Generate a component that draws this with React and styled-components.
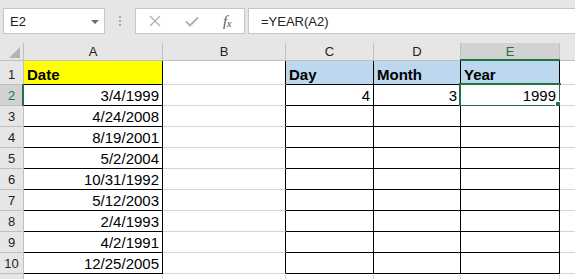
import React from 'react';
import styled, { createGlobalStyle } from 'styled-components';

const GlobalStyle = createGlobalStyle`
  html, body {
    margin: 0;
    padding: 0;
    background: #ffffff;
    overflow: hidden;
  }
  * {
    box-sizing: border-box;
  }
`;

const GREEN = '#217346';
const GRID = '#d4d4d4';
const HEAD_LINE = '#bfbfbf';

const Page = styled.div`
  width: 575px;
  height: 279px;
  overflow: hidden;
  font-family: 'Liberation Sans', Arial, sans-serif;
  background: #ffffff;
`;

const FormulaBar = styled.div`
  display: flex;
  align-items: flex-start;
  height: 43px;
  padding: 8px 0 0 3px;
  background: #e6e6e6;
`;

const NameBox = styled.div`
  position: relative;
  display: flex;
  align-items: center;
  width: 102px;
  height: 26px;
  padding-left: 6px;
  background: #ffffff;
  border: 1px solid #c6c6c6;
  font-size: 13px;
  color: #222;
`;

const Caret = styled.span`
  position: absolute;
  right: 5px;
  top: 11px;
  border-left: 4px solid transparent;
  border-right: 4px solid transparent;
  border-top: 4px solid #6d6d6d;
`;

const Grip = styled.div`
  display: flex;
  flex-direction: column;
  align-items: center;
  justify-content: center;
  gap: 2px;
  width: 30px;
  height: 26px;

  span {
    width: 2px;
    height: 2px;
    background: #a6a6a6;
  }
`;

const FxBox = styled.div`
  display: flex;
  width: 110px;
  height: 26px;
  background: #ffffff;
  border: 1px solid #c6c6c6;
`;

const FxSlot = styled.div`
  display: flex;
  align-items: center;
  justify-content: center;
  width: ${p => p.$w}px;
  height: 100%;
`;

const FxLabel = styled.span`
  font-family: 'Liberation Serif', 'Times New Roman', serif;
  font-style: italic;
  font-size: 15px;
  color: #595959;
  letter-spacing: -0.5px;

  sub {
    font-size: 11px;
    vertical-align: baseline;
    position: relative;
    top: 1px;
  }
`;

const FormulaInput = styled.div`
  flex: 1;
  display: flex;
  align-items: center;
  height: 26px;
  margin-left: 3px;
  margin-right: -4px;
  padding-left: 12px;
  background: #ffffff;
  border: 1px solid #c6c6c6;
  font-size: 13px;
  color: #222;
`;

const Sheet = styled.div`
  display: grid;
  width: 660px;
  grid-template-columns: 24px 139px 123px 88px 87px 99px 100px;
  grid-template-rows: 18px 24px repeat(10, 21px);
`;

const Corner = styled.div`
  position: relative;
  background: #e6e6e6;
  border-right: 1px solid ${HEAD_LINE};
  border-bottom: 1px solid ${HEAD_LINE};

  &::after {
    content: '';
    position: absolute;
    right: 3px;
    bottom: 2px;
    border-left: 11px solid transparent;
    border-bottom: 11px solid #b4b4b4;
  }
`;

const ColHead = styled.div`
  position: relative;
  display: flex;
  align-items: center;
  justify-content: center;
  background: ${p => (p.$active ? '#d2d2d2' : '#e6e6e6')};
  color: ${p => (p.$active ? GREEN : '#222')};
  border-right: 1px solid ${HEAD_LINE};
  border-bottom: 1px solid ${HEAD_LINE};
  font-size: 13px;

  &::after {
    content: '';
    display: ${p => (p.$active ? 'block' : 'none')};
    position: absolute;
    left: -1px;
    right: -1px;
    bottom: -1px;
    height: 2px;
    background: ${GREEN};
  }
`;

const RowHead = styled.div`
  position: relative;
  display: flex;
  align-items: flex-end;
  justify-content: center;
  padding-bottom: 2px;
  background: ${p => (p.$active ? '#d2d2d2' : '#e6e6e6')};
  color: ${p => (p.$active ? GREEN : '#222')};
  border-right: 1px solid ${HEAD_LINE};
  border-bottom: 1px solid ${HEAD_LINE};
  font-size: 13px;

  &::after {
    content: '';
    display: ${p => (p.$active ? 'block' : 'none')};
    position: absolute;
    top: -1px;
    bottom: -1px;
    right: -1px;
    width: 2px;
    background: ${GREEN};
  }
`;

const Cell = styled.div`
  position: relative;
  display: flex;
  align-items: flex-end;
  justify-content: ${p => (p.$num ? 'flex-end' : 'flex-start')};
  padding: 0 3px 1px 3px;
  background: ${p => p.$bg || '#ffffff'};
  border-right: 1px solid ${p => p.$right};
  border-bottom: 1px solid ${p => p.$bottom};
  font-size: 15px;
  font-weight: ${p => (p.$bold ? 700 : 400)};
  color: #000;
  white-space: nowrap;
`;

const Selection = styled.div`
  position: absolute;
  left: -2px;
  top: -2px;
  right: -2px;
  bottom: -2px;
  border: 2px solid ${GREEN};
  pointer-events: none;

  &::after {
    content: '';
    position: absolute;
    right: -4px;
    bottom: -4px;
    width: 7px;
    height: 7px;
    background: ${GREEN};
    border-left: 1px solid #fff;
    border-top: 1px solid #fff;
  }
`;

const COLS = ['A', 'B', 'C', 'D', 'E', 'F'];

const YELLOW = '#ffff00';
const BLUE = '#bdd7ee';

const DATA = {
  1: {
    A: { v: 'Date', bold: true, bg: YELLOW },
    C: { v: 'Day', bold: true, bg: BLUE },
    D: { v: 'Month', bold: true, bg: BLUE },
    E: { v: 'Year', bold: true, bg: BLUE },
  },
  2: { A: { v: '3/4/1999', num: true }, C: { v: '4', num: true }, D: { v: '3', num: true }, E: { v: '1999', num: true } },
  3: { A: { v: '4/24/2008', num: true } },
  4: { A: { v: '8/19/2001', num: true } },
  5: { A: { v: '5/2/2004', num: true } },
  6: { A: { v: '10/31/1992', num: true } },
  7: { A: { v: '5/12/2003', num: true } },
  8: { A: { v: '2/4/1993', num: true } },
  9: { A: { v: '4/2/1991', num: true } },
  10: { A: { v: '12/25/2005', num: true } },
};

const boxed = (r, c) => {
  if (r < 1 || r > 10) return false;
  return c === 'A' || c === 'C' || c === 'D' || c === 'E';
};

const CrossIcon = () => (
  <svg width="12" height="12" viewBox="0 0 12 12">
    <path d="M1 1 L11 11 M11 1 L1 11" stroke="#b3b3b3" strokeWidth="1.4" fill="none" />
  </svg>
);

const CheckIcon = () => (
  <svg width="14" height="11" viewBox="0 0 14 11">
    <path d="M1 5.5 L5 9.5 L13 1.5" stroke="#b3b3b3" strokeWidth="2" fill="none" />
  </svg>
);

export default function App() {
  // row 11 and column F are only slivers at the window edges, their labels fall outside
  const rows = Array.from({ length: 11 }, (_, i) => i + 1);

  return (
    <Page>
      <GlobalStyle />
      <FormulaBar>
        <NameBox>
          E2
          <Caret />
        </NameBox>
        <Grip>
          <span />
          <span />
          <span />
        </Grip>
        <FxBox>
          <FxSlot $w={37}>
            <CrossIcon />
          </FxSlot>
          <FxSlot $w={37}>
            <CheckIcon />
          </FxSlot>
          <FxSlot $w={34}>
            <FxLabel>
              f<sub>x</sub>
            </FxLabel>
          </FxSlot>
        </FxBox>
        <FormulaInput>=YEAR(A2)</FormulaInput>
      </FormulaBar>

      <Sheet>
        <Corner />
        {COLS.map(c => (
          <ColHead key={c} $active={c === 'E'}>
            {c === 'F' ? '' : c}
          </ColHead>
        ))}
        {rows.map(r => (
          <React.Fragment key={r}>
            <RowHead $active={r === 2}>{r <= 10 ? r : ''}</RowHead>
            {COLS.map((c, ci) => {
              const d = (DATA[r] && DATA[r][c]) || {};
              const right = boxed(r, c) || boxed(r, COLS[ci + 1]) ? '#000' : GRID;
              const bottom = boxed(r, c) || boxed(r + 1, c) ? '#000' : GRID;
              return (
                <Cell
                  key={c}
                  $right={right}
                  $bottom={bottom}
                  $bg={d.bg}
                  $bold={d.bold}
                  $num={d.num}
                >
                  {d.v}
                  {r === 2 && c === 'E' && <Selection />}
                </Cell>
              );
            })}
          </React.Fragment>
        ))}
      </Sheet>
    </Page>
  );
}
